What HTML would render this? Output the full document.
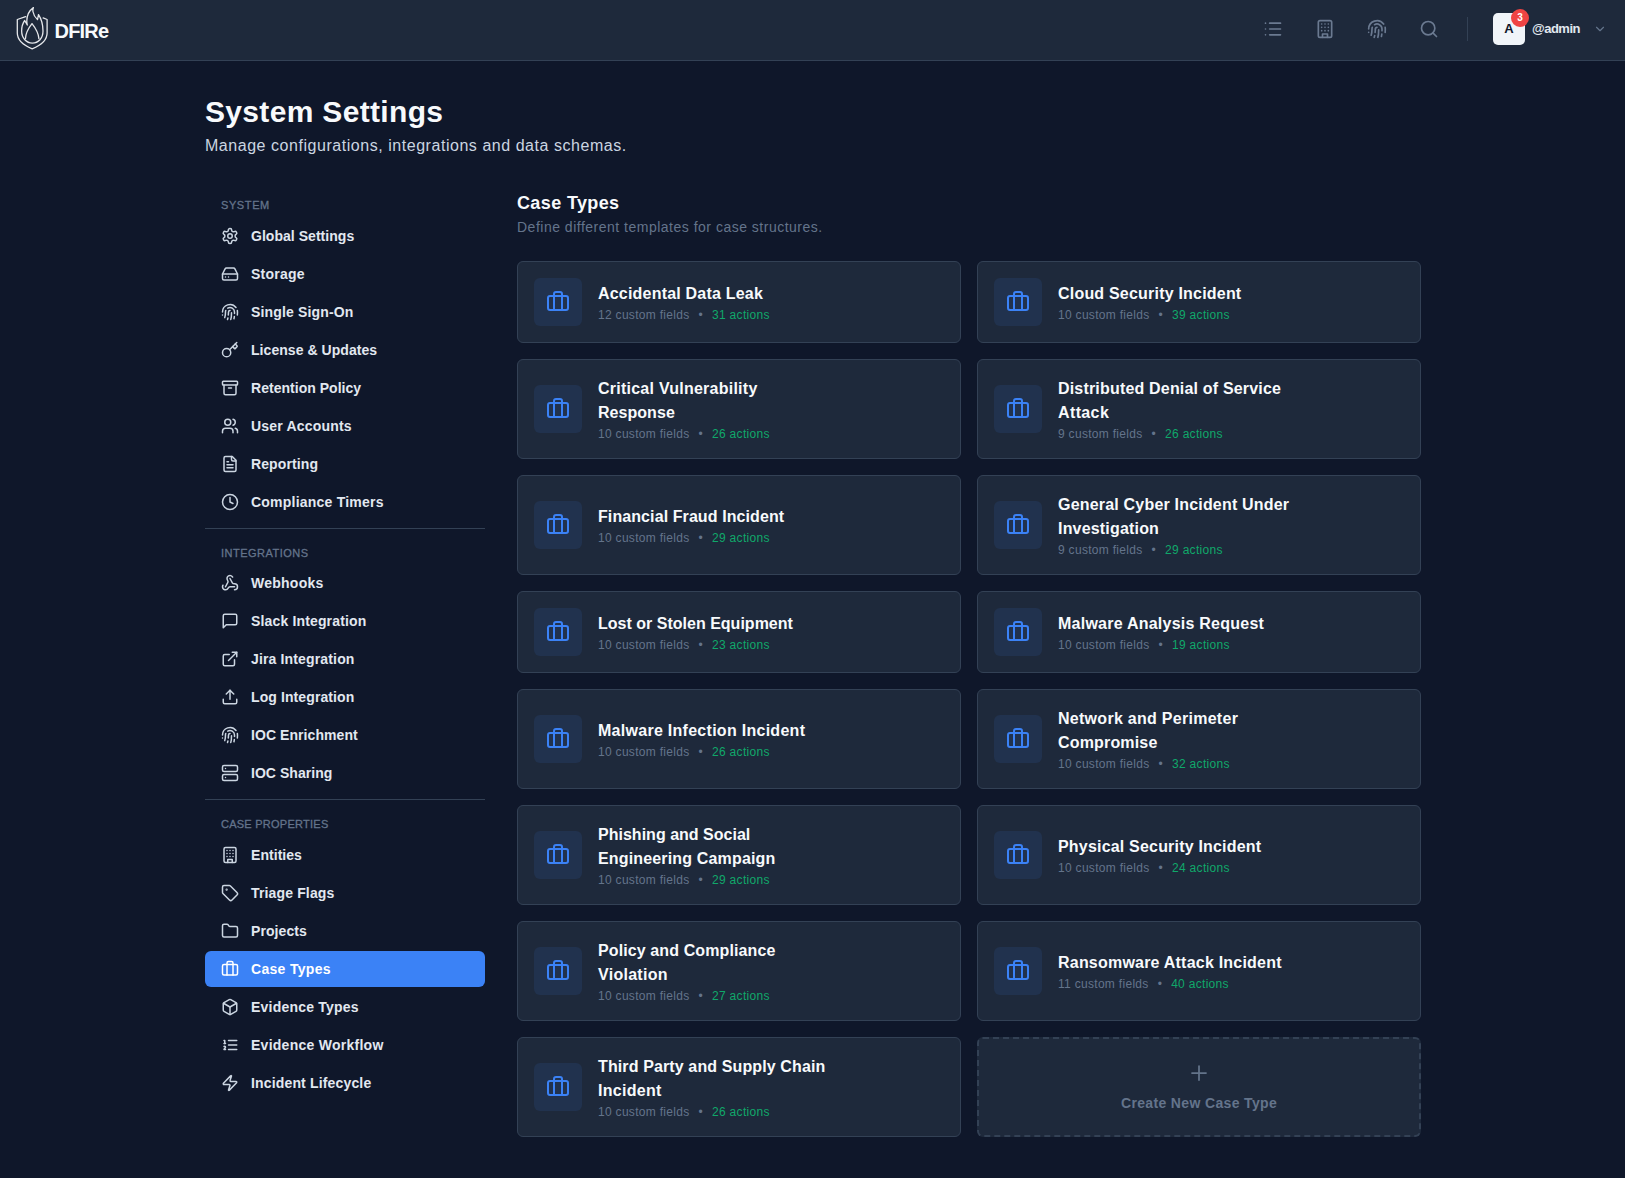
<!DOCTYPE html><html><head><meta charset="utf-8"><title>System Settings</title><style>
*{box-sizing:border-box;margin:0;padding:0}
html,body{width:1625px;height:1178px;overflow:hidden}
body{background:#0f172a;font-family:"Liberation Sans",sans-serif;color:#e2e8f0;position:relative}
svg{display:block}
.hdr{position:absolute;left:0;top:0;width:1625px;height:61px;background:#1e293b;border-bottom:1px solid #334155}
.logo{position:absolute;left:0;top:0}
.brand{position:absolute;left:54.5px;top:19px;font-size:20px;line-height:24px;font-weight:700;color:#f8fafc;letter-spacing:-0.8px}
.hicon{position:absolute;top:19px;color:#6b7a91}
.sep{position:absolute;left:1467px;top:17px;width:1px;height:24px;background:#334155}
.avatar{position:absolute;left:1493px;top:13px;width:32px;height:32px;border-radius:5px;background:#f1f5f9;color:#0f172a;font-weight:700;font-size:13px;line-height:32px;text-align:center}
.badge{position:absolute;left:1511px;top:9px;width:18px;height:18px;border-radius:9px;background:#ef4444;color:#fff;font-weight:700;font-size:10px;line-height:18px;text-align:center}
.uname{position:absolute;left:1532px;top:20px;font-size:13px;line-height:18px;font-weight:700;color:#e2e8f0;letter-spacing:-0.5px}
.chev{position:absolute;left:1593px;top:22px;color:#64748b}
.h1{position:absolute;left:205px;top:94px;letter-spacing:0.33px;font-size:30px;line-height:36px;font-weight:700;color:#f8fafc}
.sub{position:absolute;left:205px;top:134px;letter-spacing:0.54px;font-size:16px;line-height:24px;color:#cbd5e1}
.nav{position:absolute;left:205px;top:197px;width:280px}
.sec{border-top:1px solid #334155;padding-top:16px;padding-bottom:8px}
.sec.first{border-top:none;padding-top:0}
.sec.s2 .lbl{height:20px}
.lbl{font-size:11px;line-height:16px;height:21px;padding-left:16px;color:#64748b;font-weight:400;letter-spacing:0.6px;text-transform:uppercase;-webkit-text-stroke:0.3px #64748b}
.item{display:flex;align-items:center;height:36px;padding-left:16px;margin-bottom:2px;border-radius:6px;color:#e2e8f0;font-size:14px;font-weight:700;letter-spacing:0.1px}
.item:last-child{margin-bottom:0}
.item svg{margin-right:12px;flex:none;color:#cbd5e1}
.item.active{background:#3b82f6;color:#fff}
.item.active svg{color:#fff}
.ct{position:absolute;left:517px;top:189px;width:904px}
.ct h2{font-size:18px;line-height:28px;font-weight:700;color:#f8fafc;letter-spacing:0.37px}
.ct .desc{font-size:14px;line-height:20px;color:#64748b;letter-spacing:0.5px}
.grid{position:absolute;left:517px;top:261px;width:904px;display:grid;grid-template-columns:444px 444px;column-gap:16px;row-gap:16px}
.card{display:flex;align-items:center;background:#1e293b;border:1px solid #334155;border-radius:6px;padding:16px;min-height:82px}
.ibox{width:48px;height:48px;flex:none;border-radius:6px;background:#21324e;display:flex;align-items:center;justify-content:center;color:#3b82f6;margin-right:16px}
.ttl{font-size:16px;line-height:24px;font-weight:700;color:#f8fafc;letter-spacing:0.2px;position:relative;top:1px}
.meta{margin-top:2px;font-size:12px;line-height:16px;color:#64748b;white-space:nowrap;letter-spacing:0.3px}
.meta .dot{display:inline-block;margin:0 9px 0 9px}
.meta .act{color:#10a86a}
.new{border:2px dashed #334155;background:#1e293b;border-radius:6px;display:flex;flex-direction:column;align-items:center;justify-content:center;color:#64748b;height:100px}
.new .nt{margin-top:8px;font-size:14px;line-height:20px;font-weight:700;letter-spacing:0.35px}
</style></head><body>
<div class="hdr"><svg class="logo" width="60" height="60" viewBox="0 0 60 60" fill="none" stroke="#e5e7eb" stroke-width="1.3" stroke-linecap="round" stroke-linejoin="round">
<path d="M25.6 16.6 L17.3 19.5 V33 C17.3 40.5 24 45.5 32.2 48.8 C40.4 45.5 47.1 40.5 47.1 33 V19.5 L43.1 17.9"/>
<path d="M33.4 7.6 C29 10.8 26.8 15.8 26.8 21 C26.8 22.5 27 23.8 27.3 25 L24.7 20.5 C22.5 23.5 21.65 27.5 21.65 31 C21.65 38.2 26.5 43.05 32.3 43.05 C38.5 43.05 43 38.2 43 31 C43 24.5 41.3 18.8 38.5 14.6 L37.5 19.6 C35.3 17.5 33.4 14.5 32.9 11.5 C32.7 10 32.9 8.6 33.4 7.6 Z"/>
<path d="M25.5 38.6 C25.6 33.5 28.5 28 32 23.6 C35.5 28 38.5 33.5 38.9 38.6"/>
</svg><div class="brand">DFIRe</div>
<div class="hicon" style="left:1263px"><svg class="" width="20" height="20" viewBox="0 0 24 24" fill="none" stroke="currentColor" stroke-width="2" stroke-linecap="round" stroke-linejoin="round"><path d="M3 5h.01"/><path d="M3 12h.01"/><path d="M3 19h.01"/><path d="M8 5h13"/><path d="M8 12h13"/><path d="M8 19h13"/></svg></div>
<div class="hicon" style="left:1315px"><svg class="" width="20" height="20" viewBox="0 0 24 24" fill="none" stroke="currentColor" stroke-width="2" stroke-linecap="round" stroke-linejoin="round"><rect width="16" height="20" x="4" y="2" rx="2" ry="2"/><path d="M9 22v-4h6v4"/><path d="M8 6h.01"/><path d="M16 6h.01"/><path d="M12 6h.01"/><path d="M12 10h.01"/><path d="M12 14h.01"/><path d="M16 10h.01"/><path d="M16 14h.01"/><path d="M8 10h.01"/><path d="M8 14h.01"/></svg></div>
<div class="hicon" style="left:1367px"><svg class="" width="20" height="20" viewBox="0 0 24 24" fill="none" stroke="currentColor" stroke-width="2" stroke-linecap="round" stroke-linejoin="round"><path d="M12 10a2 2 0 0 0-2 2c0 1.02-.1 2.51-.26 4"/><path d="M14 13.12c0 2.38 0 6.38-1 8.88"/><path d="M17.29 21.02c.12-.6.43-2.3.5-3.02"/><path d="M2 12a10 10 0 0 1 18-6"/><path d="M2 16h.01"/><path d="M21.8 16c.2-2 .131-5.354 0-6"/><path d="M5 19.5C5.5 18 6 15 6 12a6 6 0 0 1 .34-2"/><path d="M8.65 22c.21-.66.45-1.32.57-2"/><path d="M9 6.8a6 6 0 0 1 9 5.2v2"/></svg></div>
<div class="hicon" style="left:1419px"><svg class="" width="20" height="20" viewBox="0 0 24 24" fill="none" stroke="currentColor" stroke-width="2" stroke-linecap="round" stroke-linejoin="round"><path d="m21 21-4.34-4.34"/><circle cx="11" cy="11" r="8"/></svg></div>
<div class="sep"></div><div class="avatar">A</div><div class="badge">3</div><div class="uname">@admin</div>
<div class="chev"><svg class="" width="14" height="14" viewBox="0 0 24 24" fill="none" stroke="currentColor" stroke-width="2" stroke-linecap="round" stroke-linejoin="round"><path d="m6 9 6 6 6-6"/></svg></div>
</div>
<div class="h1">System Settings</div><div class="sub">Manage configurations, integrations and data schemas.</div>
<div class="nav">
<div class="sec first"><div class="lbl" style="letter-spacing:0.6px">System</div>
<div class="item"><svg class="" width="18" height="18" viewBox="0 0 24 24" fill="none" stroke="currentColor" stroke-width="2" stroke-linecap="round" stroke-linejoin="round"><path d="M12.22 2h-.44a2 2 0 0 0-2 2v.18a2 2 0 0 1-1 1.73l-.43.25a2 2 0 0 1-2 0l-.15-.08a2 2 0 0 0-2.73.73l-.22.38a2 2 0 0 0 .73 2.73l.15.1a2 2 0 0 1 1 1.72v.51a2 2 0 0 1-1 1.74l-.15.09a2 2 0 0 0-.73 2.73l.22.38a2 2 0 0 0 2.73.73l.15-.08a2 2 0 0 1 2 0l.43.25a2 2 0 0 1 1 1.73V20a2 2 0 0 0 2 2h.44a2 2 0 0 0 2-2v-.18a2 2 0 0 1 1-1.73l.43-.25a2 2 0 0 1 2 0l.15.08a2 2 0 0 0 2.73-.73l.22-.39a2 2 0 0 0-.73-2.73l-.15-.08a2 2 0 0 1-1-1.74v-.5a2 2 0 0 1 1-1.74l.15-.09a2 2 0 0 0 .73-2.73l-.22-.38a2 2 0 0 0-2.73-.73l-.15.08a2 2 0 0 1-2 0l-.43-.25a2 2 0 0 1-1-1.73V4a2 2 0 0 0-2-2z"/><circle cx="12" cy="12" r="3"/></svg><span class="ln" style="letter-spacing:0.037px">Global Settings</span></div>
<div class="item"><svg class="" width="18" height="18" viewBox="0 0 24 24" fill="none" stroke="currentColor" stroke-width="2" stroke-linecap="round" stroke-linejoin="round"><line x1="22" x2="2" y1="12" y2="12"/><path d="M5.45 5.11 2 12v6a2 2 0 0 0 2 2h16a2 2 0 0 0 2-2v-6l-3.45-6.89A2 2 0 0 0 16.76 4H7.24a2 2 0 0 0-1.79 1.11z"/><line x1="6" x2="6.01" y1="16" y2="16"/><line x1="10" x2="10.01" y1="16" y2="16"/></svg><span class="ln" style="letter-spacing:0.227px">Storage</span></div>
<div class="item"><svg class="" width="18" height="18" viewBox="0 0 24 24" fill="none" stroke="currentColor" stroke-width="2" stroke-linecap="round" stroke-linejoin="round"><path d="M12 10a2 2 0 0 0-2 2c0 1.02-.1 2.51-.26 4"/><path d="M14 13.12c0 2.38 0 6.38-1 8.88"/><path d="M17.29 21.02c.12-.6.43-2.3.5-3.02"/><path d="M2 12a10 10 0 0 1 18-6"/><path d="M2 16h.01"/><path d="M21.8 16c.2-2 .131-5.354 0-6"/><path d="M5 19.5C5.5 18 6 15 6 12a6 6 0 0 1 .34-2"/><path d="M8.65 22c.21-.66.45-1.32.57-2"/><path d="M9 6.8a6 6 0 0 1 9 5.2v2"/></svg><span class="ln" style="letter-spacing:0.159px">Single Sign-On</span></div>
<div class="item"><svg class="" width="18" height="18" viewBox="0 0 24 24" fill="none" stroke="currentColor" stroke-width="2" stroke-linecap="round" stroke-linejoin="round"><path d="m15.5 7.5 2.3 2.3a1 1 0 0 0 1.4 0l2.1-2.1a1 1 0 0 0 0-1.4L19 4"/><path d="m21 2-9.6 9.6"/><circle cx="7.5" cy="15.5" r="5.5"/></svg><span class="ln" style="letter-spacing:0.052px">License &amp; Updates</span></div>
<div class="item"><svg class="" width="18" height="18" viewBox="0 0 24 24" fill="none" stroke="currentColor" stroke-width="2" stroke-linecap="round" stroke-linejoin="round"><rect width="20" height="5" x="2" y="3" rx="1"/><path d="M4 8v11a2 2 0 0 0 2 2h12a2 2 0 0 0 2-2V8"/><path d="M10 12h4"/></svg><span class="ln" style="letter-spacing:0.027px">Retention Policy</span></div>
<div class="item"><svg class="" width="18" height="18" viewBox="0 0 24 24" fill="none" stroke="currentColor" stroke-width="2" stroke-linecap="round" stroke-linejoin="round"><path d="M16 21v-2a4 4 0 0 0-4-4H6a4 4 0 0 0-4 4v2"/><circle cx="9" cy="7" r="4"/><path d="M22 21v-2a4 4 0 0 0-3-3.87"/><path d="M16 3.13a4 4 0 0 1 0 7.75"/></svg><span class="ln" style="letter-spacing:0.192px">User Accounts</span></div>
<div class="item"><svg class="" width="18" height="18" viewBox="0 0 24 24" fill="none" stroke="currentColor" stroke-width="2" stroke-linecap="round" stroke-linejoin="round"><path d="M15 2H6a2 2 0 0 0-2 2v16a2 2 0 0 0 2 2h12a2 2 0 0 0 2-2V7Z"/><path d="M14 2v4a2 2 0 0 0 2 2h4"/><path d="M10 9H8"/><path d="M16 13H8"/><path d="M16 17H8"/></svg><span class="ln" style="letter-spacing:0.111px">Reporting</span></div>
<div class="item"><svg class="" width="18" height="18" viewBox="0 0 24 24" fill="none" stroke="currentColor" stroke-width="2" stroke-linecap="round" stroke-linejoin="round"><circle cx="12" cy="12" r="10"/><polyline points="12 6 12 12 16 14"/></svg><span class="ln" style="letter-spacing:0.224px">Compliance Timers</span></div>
</div>
<div class="sec s2"><div class="lbl" style="letter-spacing:0.49px">Integrations</div>
<div class="item"><svg class="" width="18" height="18" viewBox="0 0 24 24" fill="none" stroke="currentColor" stroke-width="2" stroke-linecap="round" stroke-linejoin="round"><path d="M18 16.98h-5.99c-1.1 0-1.95.94-2.48 1.9A4 4 0 0 1 2 17c.01-.7.2-1.4.57-2"/><path d="m6 17 3.13-5.78c.53-.97.1-2.180-.5-3.1a4 4 0 1 1 6.89-4.06"/><path d="m12 6 3.13 5.73C15.66 12.7 16.9 13 18 13a4 4 0 0 1 0 8"/></svg><span class="ln" style="letter-spacing:0.252px">Webhooks</span></div>
<div class="item"><svg class="" width="18" height="18" viewBox="0 0 24 24" fill="none" stroke="currentColor" stroke-width="2" stroke-linecap="round" stroke-linejoin="round"><path d="M21 15a2 2 0 0 1-2 2H7l-4 4V5a2 2 0 0 1 2-2h14a2 2 0 0 1 2 2z"/></svg><span class="ln" style="letter-spacing:0.155px">Slack Integration</span></div>
<div class="item"><svg class="" width="18" height="18" viewBox="0 0 24 24" fill="none" stroke="currentColor" stroke-width="2" stroke-linecap="round" stroke-linejoin="round"><path d="M15 3h6v6"/><path d="M10 14 21 3"/><path d="M18 13v6a2 2 0 0 1-2 2H5a2 2 0 0 1-2-2V8a2 2 0 0 1 2-2h6"/></svg><span class="ln" style="letter-spacing:0.151px">Jira Integration</span></div>
<div class="item"><svg class="" width="18" height="18" viewBox="0 0 24 24" fill="none" stroke="currentColor" stroke-width="2" stroke-linecap="round" stroke-linejoin="round"><path d="M21 15v4a2 2 0 0 1-2 2H5a2 2 0 0 1-2-2v-4"/><polyline points="17 8 12 3 7 8"/><line x1="12" x2="12" y1="3" y2="15"/></svg><span class="ln" style="letter-spacing:0.101px">Log Integration</span></div>
<div class="item"><svg class="" width="18" height="18" viewBox="0 0 24 24" fill="none" stroke="currentColor" stroke-width="2" stroke-linecap="round" stroke-linejoin="round"><path d="M12 10a2 2 0 0 0-2 2c0 1.02-.1 2.51-.26 4"/><path d="M14 13.12c0 2.38 0 6.38-1 8.88"/><path d="M17.29 21.02c.12-.6.43-2.3.5-3.02"/><path d="M2 12a10 10 0 0 1 18-6"/><path d="M2 16h.01"/><path d="M21.8 16c.2-2 .131-5.354 0-6"/><path d="M5 19.5C5.5 18 6 15 6 12a6 6 0 0 1 .34-2"/><path d="M8.65 22c.21-.66.45-1.32.57-2"/><path d="M9 6.8a6 6 0 0 1 9 5.2v2"/></svg><span class="ln" style="letter-spacing:0.069px">IOC Enrichment</span></div>
<div class="item"><svg class="" width="18" height="18" viewBox="0 0 24 24" fill="none" stroke="currentColor" stroke-width="2" stroke-linecap="round" stroke-linejoin="round"><rect width="20" height="8" x="2" y="2" rx="2" ry="2"/><rect width="20" height="8" x="2" y="14" rx="2" ry="2"/><line x1="6" x2="6.01" y1="6" y2="6"/><line x1="6" x2="6.01" y1="18" y2="18"/></svg><span class="ln" style="letter-spacing:0.04px">IOC Sharing</span></div>
</div>
<div class="sec"><div class="lbl" style="letter-spacing:0.25px">Case Properties</div>
<div class="item"><svg class="" width="18" height="18" viewBox="0 0 24 24" fill="none" stroke="currentColor" stroke-width="2" stroke-linecap="round" stroke-linejoin="round"><rect width="16" height="20" x="4" y="2" rx="2" ry="2"/><path d="M9 22v-4h6v4"/><path d="M8 6h.01"/><path d="M16 6h.01"/><path d="M12 6h.01"/><path d="M12 10h.01"/><path d="M12 14h.01"/><path d="M16 10h.01"/><path d="M16 14h.01"/><path d="M8 10h.01"/><path d="M8 14h.01"/></svg><span class="ln" style="letter-spacing:0.046px">Entities</span></div>
<div class="item"><svg class="" width="18" height="18" viewBox="0 0 24 24" fill="none" stroke="currentColor" stroke-width="2" stroke-linecap="round" stroke-linejoin="round"><path d="M12.586 2.586A2 2 0 0 0 11.172 2H4a2 2 0 0 0-2 2v7.172a2 2 0 0 0 .586 1.414l8.704 8.704a2.426 2.426 0 0 0 3.42 0l6.58-6.58a2.426 2.426 0 0 0 0-3.42z"/><circle cx="7.5" cy="7.5" r=".5" fill="currentColor"/></svg><span class="ln" style="letter-spacing:0.146px">Triage Flags</span></div>
<div class="item"><svg class="" width="18" height="18" viewBox="0 0 24 24" fill="none" stroke="currentColor" stroke-width="2" stroke-linecap="round" stroke-linejoin="round"><path d="M20 20a2 2 0 0 0 2-2V8a2 2 0 0 0-2-2h-7.9a2 2 0 0 1-1.69-.9L9.6 3.9A2 2 0 0 0 7.93 3H4a2 2 0 0 0-2 2v13a2 2 0 0 0 2 2Z"/></svg><span class="ln" style="letter-spacing:0.078px">Projects</span></div>
<div class="item active"><svg class="" width="18" height="18" viewBox="0 0 24 24" fill="none" stroke="currentColor" stroke-width="2" stroke-linecap="round" stroke-linejoin="round"><path d="M16 20V4a2 2 0 0 0-2-2h-4a2 2 0 0 0-2 2v16"/><rect width="20" height="14" x="2" y="6" rx="2"/></svg><span class="ln" style="letter-spacing:0.311px">Case Types</span></div>
<div class="item"><svg class="" width="18" height="18" viewBox="0 0 24 24" fill="none" stroke="currentColor" stroke-width="2" stroke-linecap="round" stroke-linejoin="round"><path d="M21 8a2 2 0 0 0-1-1.73l-7-4a2 2 0 0 0-2 0l-7 4A2 2 0 0 0 3 8v8a2 2 0 0 0 1 1.73l7 4a2 2 0 0 0 2 0l7-4A2 2 0 0 0 21 16Z"/><path d="m3.3 7 8.7 5 8.7-5"/><path d="M12 22V12"/></svg><span class="ln" style="letter-spacing:0.216px">Evidence Types</span></div>
<div class="item"><svg class="" width="18" height="18" viewBox="0 0 24 24" fill="none" stroke="currentColor" stroke-width="2" stroke-linecap="round" stroke-linejoin="round"><path d="M10 12h11"/><path d="M10 18h11"/><path d="M10 6h11"/><path d="M4 10h2"/><path d="M4 6h1v4"/><path d="M6 18H4c0-1 2-2 2-3s-1-1.5-2-1"/></svg><span class="ln" style="letter-spacing:0.262px">Evidence Workflow</span></div>
<div class="item"><svg class="" width="18" height="18" viewBox="0 0 24 24" fill="none" stroke="currentColor" stroke-width="2" stroke-linecap="round" stroke-linejoin="round"><path d="M4 14a1 1 0 0 1-.78-1.63l9.9-10.2a.5.5 0 0 1 .86.46l-1.92 6.02A1 1 0 0 0 13 10h7a1 1 0 0 1 .78 1.63l-9.9 10.2a.5.5 0 0 1-.86-.46l1.92-6.02A1 1 0 0 0 11 14z"/></svg><span class="ln" style="letter-spacing:0.159px">Incident Lifecycle</span></div>
</div>
</div>
<div class="ct"><h2>Case Types</h2><div class="desc">Define different templates for case structures.</div></div>
<div class="grid">
<div class="card"><div class="ibox"><svg class="" width="24" height="24" viewBox="0 0 24 24" fill="none" stroke="currentColor" stroke-width="2" stroke-linecap="round" stroke-linejoin="round"><path d="M16 20V4a2 2 0 0 0-2-2h-4a2 2 0 0 0-2 2v16"/><rect width="20" height="14" x="2" y="6" rx="2"/></svg></div><div class="txt"><div class="ttl"><span class="ln" style="letter-spacing:0.202px">Accidental Data Leak</span></div><div class="meta">12 custom fields<span class="dot">&bull;</span><span class="act">31 actions</span></div></div></div>
<div class="card"><div class="ibox"><svg class="" width="24" height="24" viewBox="0 0 24 24" fill="none" stroke="currentColor" stroke-width="2" stroke-linecap="round" stroke-linejoin="round"><path d="M16 20V4a2 2 0 0 0-2-2h-4a2 2 0 0 0-2 2v16"/><rect width="20" height="14" x="2" y="6" rx="2"/></svg></div><div class="txt"><div class="ttl"><span class="ln" style="letter-spacing:0.205px">Cloud Security Incident</span></div><div class="meta">10 custom fields<span class="dot">&bull;</span><span class="act">39 actions</span></div></div></div>
<div class="card"><div class="ibox"><svg class="" width="24" height="24" viewBox="0 0 24 24" fill="none" stroke="currentColor" stroke-width="2" stroke-linecap="round" stroke-linejoin="round"><path d="M16 20V4a2 2 0 0 0-2-2h-4a2 2 0 0 0-2 2v16"/><rect width="20" height="14" x="2" y="6" rx="2"/></svg></div><div class="txt"><div class="ttl"><span class="ln" style="letter-spacing:0.246px">Critical Vulnerability</span><br><span class="ln" style="letter-spacing:0.045px">Response</span></div><div class="meta">10 custom fields<span class="dot">&bull;</span><span class="act">26 actions</span></div></div></div>
<div class="card"><div class="ibox"><svg class="" width="24" height="24" viewBox="0 0 24 24" fill="none" stroke="currentColor" stroke-width="2" stroke-linecap="round" stroke-linejoin="round"><path d="M16 20V4a2 2 0 0 0-2-2h-4a2 2 0 0 0-2 2v16"/><rect width="20" height="14" x="2" y="6" rx="2"/></svg></div><div class="txt"><div class="ttl"><span class="ln" style="letter-spacing:0.181px">Distributed Denial of Service</span><br><span class="ln" style="letter-spacing:0.376px">Attack</span></div><div class="meta">9 custom fields<span class="dot">&bull;</span><span class="act">26 actions</span></div></div></div>
<div class="card"><div class="ibox"><svg class="" width="24" height="24" viewBox="0 0 24 24" fill="none" stroke="currentColor" stroke-width="2" stroke-linecap="round" stroke-linejoin="round"><path d="M16 20V4a2 2 0 0 0-2-2h-4a2 2 0 0 0-2 2v16"/><rect width="20" height="14" x="2" y="6" rx="2"/></svg></div><div class="txt"><div class="ttl"><span class="ln" style="letter-spacing:0.09px">Financial Fraud Incident</span></div><div class="meta">10 custom fields<span class="dot">&bull;</span><span class="act">29 actions</span></div></div></div>
<div class="card"><div class="ibox"><svg class="" width="24" height="24" viewBox="0 0 24 24" fill="none" stroke="currentColor" stroke-width="2" stroke-linecap="round" stroke-linejoin="round"><path d="M16 20V4a2 2 0 0 0-2-2h-4a2 2 0 0 0-2 2v16"/><rect width="20" height="14" x="2" y="6" rx="2"/></svg></div><div class="txt"><div class="ttl"><span class="ln" style="letter-spacing:0.195px">General Cyber Incident Under</span><br><span class="ln" style="letter-spacing:0.184px">Investigation</span></div><div class="meta">9 custom fields<span class="dot">&bull;</span><span class="act">29 actions</span></div></div></div>
<div class="card"><div class="ibox"><svg class="" width="24" height="24" viewBox="0 0 24 24" fill="none" stroke="currentColor" stroke-width="2" stroke-linecap="round" stroke-linejoin="round"><path d="M16 20V4a2 2 0 0 0-2-2h-4a2 2 0 0 0-2 2v16"/><rect width="20" height="14" x="2" y="6" rx="2"/></svg></div><div class="txt"><div class="ttl"><span class="ln" style="letter-spacing:0.01px">Lost or Stolen Equipment</span></div><div class="meta">10 custom fields<span class="dot">&bull;</span><span class="act">23 actions</span></div></div></div>
<div class="card"><div class="ibox"><svg class="" width="24" height="24" viewBox="0 0 24 24" fill="none" stroke="currentColor" stroke-width="2" stroke-linecap="round" stroke-linejoin="round"><path d="M16 20V4a2 2 0 0 0-2-2h-4a2 2 0 0 0-2 2v16"/><rect width="20" height="14" x="2" y="6" rx="2"/></svg></div><div class="txt"><div class="ttl"><span class="ln" style="letter-spacing:0.24px">Malware Analysis Request</span></div><div class="meta">10 custom fields<span class="dot">&bull;</span><span class="act">19 actions</span></div></div></div>
<div class="card"><div class="ibox"><svg class="" width="24" height="24" viewBox="0 0 24 24" fill="none" stroke="currentColor" stroke-width="2" stroke-linecap="round" stroke-linejoin="round"><path d="M16 20V4a2 2 0 0 0-2-2h-4a2 2 0 0 0-2 2v16"/><rect width="20" height="14" x="2" y="6" rx="2"/></svg></div><div class="txt"><div class="ttl"><span class="ln" style="letter-spacing:0.278px">Malware Infection Incident</span></div><div class="meta">10 custom fields<span class="dot">&bull;</span><span class="act">26 actions</span></div></div></div>
<div class="card"><div class="ibox"><svg class="" width="24" height="24" viewBox="0 0 24 24" fill="none" stroke="currentColor" stroke-width="2" stroke-linecap="round" stroke-linejoin="round"><path d="M16 20V4a2 2 0 0 0-2-2h-4a2 2 0 0 0-2 2v16"/><rect width="20" height="14" x="2" y="6" rx="2"/></svg></div><div class="txt"><div class="ttl"><span class="ln" style="letter-spacing:0.28px">Network and Perimeter</span><br><span class="ln" style="letter-spacing:0.167px">Compromise</span></div><div class="meta">10 custom fields<span class="dot">&bull;</span><span class="act">32 actions</span></div></div></div>
<div class="card"><div class="ibox"><svg class="" width="24" height="24" viewBox="0 0 24 24" fill="none" stroke="currentColor" stroke-width="2" stroke-linecap="round" stroke-linejoin="round"><path d="M16 20V4a2 2 0 0 0-2-2h-4a2 2 0 0 0-2 2v16"/><rect width="20" height="14" x="2" y="6" rx="2"/></svg></div><div class="txt"><div class="ttl"><span class="ln" style="letter-spacing:0.015px">Phishing and Social</span><br><span class="ln" style="letter-spacing:0.16px">Engineering Campaign</span></div><div class="meta">10 custom fields<span class="dot">&bull;</span><span class="act">29 actions</span></div></div></div>
<div class="card"><div class="ibox"><svg class="" width="24" height="24" viewBox="0 0 24 24" fill="none" stroke="currentColor" stroke-width="2" stroke-linecap="round" stroke-linejoin="round"><path d="M16 20V4a2 2 0 0 0-2-2h-4a2 2 0 0 0-2 2v16"/><rect width="20" height="14" x="2" y="6" rx="2"/></svg></div><div class="txt"><div class="ttl"><span class="ln" style="letter-spacing:0.192px">Physical Security Incident</span></div><div class="meta">10 custom fields<span class="dot">&bull;</span><span class="act">24 actions</span></div></div></div>
<div class="card"><div class="ibox"><svg class="" width="24" height="24" viewBox="0 0 24 24" fill="none" stroke="currentColor" stroke-width="2" stroke-linecap="round" stroke-linejoin="round"><path d="M16 20V4a2 2 0 0 0-2-2h-4a2 2 0 0 0-2 2v16"/><rect width="20" height="14" x="2" y="6" rx="2"/></svg></div><div class="txt"><div class="ttl"><span class="ln" style="letter-spacing:0.107px">Policy and Compliance</span><br><span class="ln" style="letter-spacing:0.278px">Violation</span></div><div class="meta">10 custom fields<span class="dot">&bull;</span><span class="act">27 actions</span></div></div></div>
<div class="card"><div class="ibox"><svg class="" width="24" height="24" viewBox="0 0 24 24" fill="none" stroke="currentColor" stroke-width="2" stroke-linecap="round" stroke-linejoin="round"><path d="M16 20V4a2 2 0 0 0-2-2h-4a2 2 0 0 0-2 2v16"/><rect width="20" height="14" x="2" y="6" rx="2"/></svg></div><div class="txt"><div class="ttl"><span class="ln" style="letter-spacing:0.214px">Ransomware Attack Incident</span></div><div class="meta">11 custom fields<span class="dot">&bull;</span><span class="act">40 actions</span></div></div></div>
<div class="card"><div class="ibox"><svg class="" width="24" height="24" viewBox="0 0 24 24" fill="none" stroke="currentColor" stroke-width="2" stroke-linecap="round" stroke-linejoin="round"><path d="M16 20V4a2 2 0 0 0-2-2h-4a2 2 0 0 0-2 2v16"/><rect width="20" height="14" x="2" y="6" rx="2"/></svg></div><div class="txt"><div class="ttl"><span class="ln" style="letter-spacing:0.121px">Third Party and Supply Chain</span><br><span class="ln" style="letter-spacing:0.279px">Incident</span></div><div class="meta">10 custom fields<span class="dot">&bull;</span><span class="act">26 actions</span></div></div></div>
<div class="new"><svg class="" width="24" height="24" viewBox="0 0 24 24" fill="none" stroke="currentColor" stroke-width="1.75" stroke-linecap="round" stroke-linejoin="round"><path d="M5 12h14"/><path d="M12 5v14"/></svg><div class="nt">Create New Case Type</div></div>
</div>
</body></html>
